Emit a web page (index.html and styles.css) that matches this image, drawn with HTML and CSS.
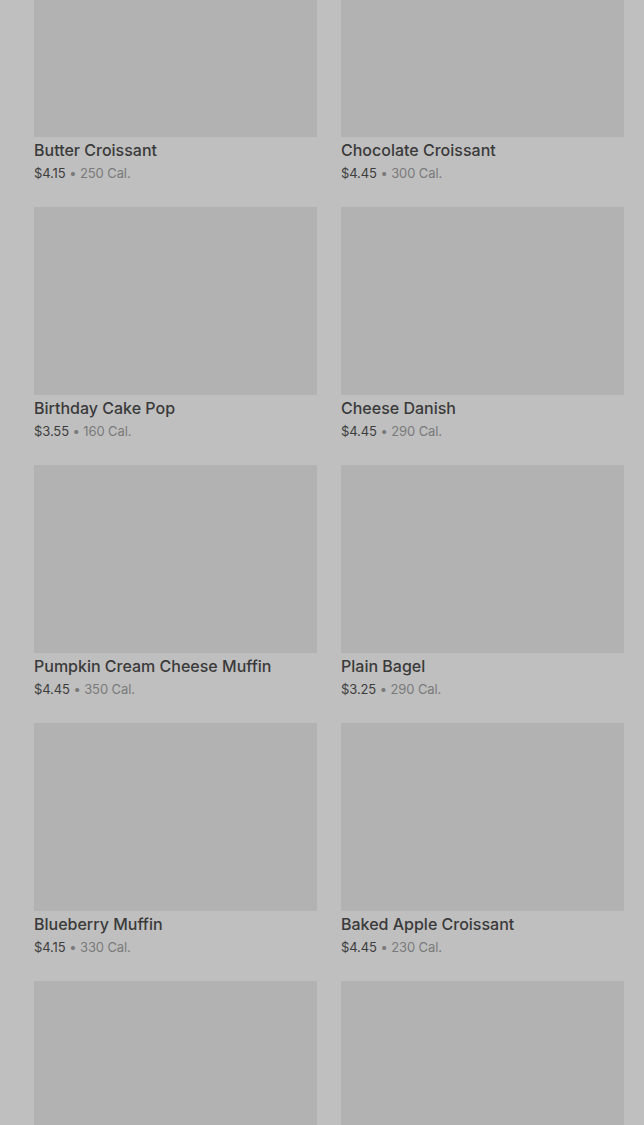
FILE: index.html
```html
<!DOCTYPE html>
<html>
<head>
	<title>Bakery</title>
	<meta charset="utf-8">
	<link rel="stylesheet" href="styles.css">
</head>
<body>
<div class="menu">
	<div class="item"><div class="pic"></div><h3>Butter Croissant</h3><p><b>$4.15</b> • 250 Cal.</p></div>
	<div class="item"><div class="pic"></div><h3>Chocolate Croissant</h3><p><b>$4.45</b> • 300 Cal.</p></div>
	<div class="item"><div class="pic"></div><h3>Birthday Cake Pop</h3><p><b>$3.55</b> • 160 Cal.</p></div>
	<div class="item"><div class="pic"></div><h3>Cheese Danish</h3><p><b>$4.45</b> • 290 Cal.</p></div>
	<div class="item"><div class="pic"></div><h3>Pumpkin Cream Cheese Muffin</h3><p><b>$4.45</b> • 350 Cal.</p></div>
	<div class="item"><div class="pic"></div><h3>Plain Bagel</h3><p><b>$3.25</b> • 290 Cal.</p></div>
	<div class="item"><div class="pic"></div><h3>Blueberry Muffin</h3><p><b>$4.15</b> • 330 Cal.</p></div>
	<div class="item"><div class="pic"></div><h3>Baked Apple Croissant</h3><p><b>$4.45</b> • 230 Cal.</p></div>
	<div class="item"><div class="pic"></div></div>
	<div class="item"><div class="pic"></div></div>
</div>
</body>
</html>
```
FILE: styles.css
```css
body, h3, p { margin: 0; padding: 0; }
html, body { background-color: #bfbfbf; overflow: hidden; height: 1125px; }
body { font-family: Inter, "Noto Sans", sans-serif; color: #3a3a3a; }

.menu { display: grid; grid-template-columns: 283px 283px; column-gap: 24px; row-gap: 25px; padding: 0 20px 0 34px; margin-top: -51px; }
.item { display: flex; flex-direction: column; }
.pic { height: 188px; background-color: #b2b2b2; }
.item h3 { margin-top: 3px; font-size: 16px; line-height: 20px; font-weight: 500; color: #3a3a3a; }
.item p { margin-top: 4px; font-size: 13px; line-height: 18px; color: #7a7a7a; letter-spacing: -0.1px; }
.item p b { font-weight: 400; color: #3e3e3e; }
```
